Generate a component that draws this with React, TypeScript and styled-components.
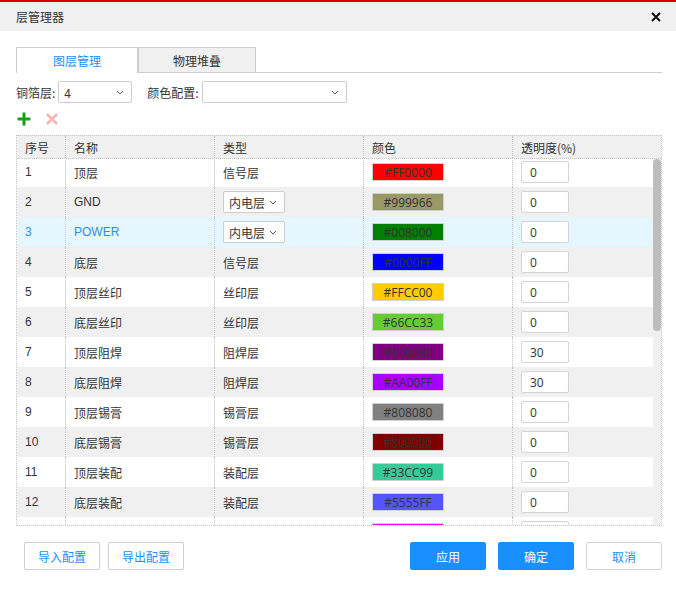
import * as React from "react";
import styled, { createGlobalStyle } from "styled-components";

const GlobalStyle = createGlobalStyle`
  html, body {
    margin: 0;
    padding: 0;
    background: #fff;
  }
  body {
    font-family: "Liberation Sans", "Noto Sans CJK SC", sans-serif;
    font-size: 12px;
    color: #333;
  }
  * {
    box-sizing: border-box;
  }
`;

const Dialog = styled.div`
  width: 676px;
  height: 591px;
  border-top: 2px solid #d40000;
  background: #fff;
  display: flex;
  flex-direction: column;
`;

const TitleBar = styled.div`
  height: 29px;
  background: #f0f0f0;
  display: flex;
  align-items: center;
  justify-content: space-between;
  padding: 0 15px 0 16px;
`;

const Title = styled.span`
  font-family: "Noto Sans CJK SC", sans-serif;
  font-size: 12px;
  color: #333;
`;

const CloseButton = styled.span`
  display: flex;
  width: 10px;
  height: 10px;
  cursor: pointer;
`;

const Content = styled.div`
  padding: 16px 14px 0 16px;
  display: flex;
  flex-direction: column;
`;

const TabBar = styled.div`
  display: flex;
  align-items: flex-end;
  height: 26px;
  border-bottom: 1px solid #ccc;
`;

const Tab = styled.div<{ $active?: boolean; $width: number }>`
  width: ${(p) => p.$width}px;
  height: ${(p) => (p.$active ? 26 : 25)}px;
  margin-bottom: ${(p) => (p.$active ? -1 : 0)}px;
  border: 1px solid #ccc;
  border-bottom: none;
  background: ${(p) => (p.$active ? "#fff" : "#f0f0f0")};
  color: ${(p) => (p.$active ? "#1890ff" : "#333")};
  font-family: "Noto Sans CJK SC", sans-serif;
  font-size: 12px;
  display: flex;
  align-items: center;
  justify-content: center;
  padding-bottom: ${(p) => (p.$active ? 1 : 0)}px;
`;

const FormRow = styled.div`
  display: flex;
  align-items: center;
  height: 22px;
  margin-top: 8px;
`;

const Label = styled.span<{ $gap?: number }>`
  font-family: "Noto Sans CJK SC", sans-serif;
  margin-left: ${(p) => p.$gap ?? 0}px;
  margin-right: 3px;
`;

const Select = styled.div<{ $width: number }>`
  width: ${(p) => p.$width}px;
  height: 22px;
  border: 1px solid #ccc;
  border-radius: 2px;
  background: #fff;
  display: flex;
  align-items: center;
  justify-content: space-between;
  padding: 0 7px 0 5px;
  font-family: "Noto Sans CJK SC", sans-serif;
  font-size: 12px;
  color: #333;
`;

const ToolRow = styled.div`
  display: flex;
  align-items: center;
  gap: 15px;
  height: 18px;
  margin-top: 7px;
  padding-left: 1px;
`;

const IconButton = styled.span`
  display: flex;
  cursor: pointer;
`;

const Table = styled.div`
  margin-top: 7px;
  border-left: 1px dotted #c4c4c4;
  border-right: 1px dotted #c4c4c4;
  border-bottom: 1px dotted #c4c4c4;
`;

const cols = "49px 149px 149px 149px 1fr";

const HeaderRow = styled.div`
  display: grid;
  grid-template-columns: ${cols};
  height: 24px;
  background: #f0f0f0;
  border-top: 1px dotted #c4c4c4;
  border-bottom: 1px dotted #c4c4c4;
`;

const HeadCell = styled.div<{ $last?: boolean }>`
  display: flex;
  align-items: center;
  padding-left: 8px;
  font-family: "Noto Sans CJK SC", sans-serif;
  border-right: ${(p) => (p.$last ? "none" : "1px dotted #c4c4c4")};
`;

const BodyArea = styled.div`
  display: flex;
  height: 366px;
`;

const RowsViewport = styled.div`
  flex: 1;
  overflow: hidden;
`;

const RowsList = styled.div`
  margin-top: -2px;
`;

const ScrollTrack = styled.div`
  width: 8px;
  background: #f0f0f0;
`;

const ScrollThumb = styled.div`
  height: 172px;
  background: #bdbdbd;
  border-radius: 4px;
`;

const Row = styled.div<{ $striped?: boolean; $selected?: boolean }>`
  display: grid;
  grid-template-columns: ${cols};
  height: 30px;
  background: ${(p) => (p.$selected ? "#e6f6fe" : p.$striped ? "#f0f0f0" : "#fff")};
  color: ${(p) => (p.$selected ? "#2d8cf0" : "#333")};
`;

const Cell = styled.div<{ $last?: boolean; $cjk?: boolean }>`
  display: flex;
  align-items: center;
  padding-left: 8px;
  font-family: ${(p) =>
    p.$cjk ? `"Noto Sans CJK SC", sans-serif` : `"Liberation Sans", "Noto Sans CJK SC", sans-serif`};
  border-right: ${(p) => (p.$last ? "none" : "1px dotted #c4c4c4")};
`;

const Swatch = styled.div<{ $color: string }>`
  width: 72px;
  height: 18px;
  border: 1px solid #d0d0d0;
  background: ${(p) => p.$color};
  color: #333;
  font-family: "Open Sans", "Noto Sans", sans-serif;
  font-size: 12px;
  display: flex;
  align-items: center;
  justify-content: center;
`;

const NumInput = styled.div`
  width: 48px;
  height: 22px;
  border: 1px solid #d4d4d4;
  border-radius: 2px;
  background: #fff;
  color: #333;
  font-family: "Open Sans", "Noto Sans", sans-serif;
  font-size: 12px;
  display: flex;
  align-items: center;
  padding-left: 8px;
`;

const Footer = styled.div`
  display: flex;
  align-items: center;
  margin-top: 16px;
  padding-left: 8px;
  gap: 8px;
`;

const Spacer = styled.div`
  flex: 1;
`;

const RightGroup = styled.div`
  display: flex;
  gap: 12px;
`;

const Button = styled.button<{ $primary?: boolean }>`
  width: 76px;
  height: 28px;
  border-radius: 2px;
  border: 1px solid ${(p) => (p.$primary ? "#1890ff" : "#d0d0d0")};
  background: ${(p) => (p.$primary ? "#1890ff" : "#fff")};
  color: ${(p) => (p.$primary ? "#fff" : "#1890ff")};
  font-family: "Noto Sans CJK SC", sans-serif;
  font-size: 12px;
  padding: 0;
  cursor: pointer;
`;

const Chevron = () => (
  <svg width="8" height="5" viewBox="0 0 8 5">
    <polyline points="1,1 4,4 7,1" fill="none" stroke="#555" strokeWidth="1" />
  </svg>
);

type Layer = {
  name: string;
  type: string;
  color: string;
  alpha: number;
  editable?: boolean;
};

const layers: Layer[] = [
  { name: "顶层", type: "信号层", color: "#FF0000", alpha: 0 },
  { name: "GND", type: "内电层", color: "#999966", alpha: 0, editable: true },
  { name: "POWER", type: "内电层", color: "#008000", alpha: 0, editable: true },
  { name: "底层", type: "信号层", color: "#0000FF", alpha: 0 },
  { name: "顶层丝印", type: "丝印层", color: "#FFCC00", alpha: 0 },
  { name: "底层丝印", type: "丝印层", color: "#66CC33", alpha: 0 },
  { name: "顶层阻焊", type: "阻焊层", color: "#800080", alpha: 30 },
  { name: "底层阻焊", type: "阻焊层", color: "#AA00FF", alpha: 30 },
  { name: "顶层锡膏", type: "锡膏层", color: "#808080", alpha: 0 },
  { name: "底层锡膏", type: "锡膏层", color: "#800000", alpha: 0 },
  { name: "顶层装配", type: "装配层", color: "#33CC99", alpha: 0 },
  { name: "底层装配", type: "装配层", color: "#5555FF", alpha: 0 },
  { name: "板框层", type: "板框层", color: "#FF00FF", alpha: 0 },
  { name: "多层", type: "多层", color: "#C0C0C0", alpha: 0 },
];

export default function App() {
  return (
    <>
      <GlobalStyle />
      <Dialog>
        <TitleBar>
          <Title>层管理器</Title>
          <CloseButton>
            <svg width="10" height="10" viewBox="0 0 10 10">
              <path d="M1 1 L9 9 M9 1 L1 9" stroke="#111" strokeWidth="2" />
            </svg>
          </CloseButton>
        </TitleBar>

        <Content>
          <TabBar>
            <Tab $active $width={122}>图层管理</Tab>
            <Tab $width={118}>物理堆叠</Tab>
          </TabBar>

          <FormRow>
            <Label>铜箔层:</Label>
            <Select $width={74}>
              <span>4</span>
              <Chevron />
            </Select>
            <Label $gap={15}>颜色配置:</Label>
            <Select $width={145}>
              <span />
              <Chevron />
            </Select>
          </FormRow>

          <ToolRow>
            <IconButton>
              <svg width="14" height="14" viewBox="0 0 14 14">
                <path d="M7 0.5 V13.5 M0.5 7 H13.5" stroke="#16a016" strokeWidth="3" />
              </svg>
            </IconButton>
            <IconButton>
              <svg width="12" height="12" viewBox="0 0 12 12">
                <path d="M1 1 L11 11 M11 1 L1 11" stroke="#fbb4b4" strokeWidth="2.6" />
              </svg>
            </IconButton>
          </ToolRow>

          <Table>
            <HeaderRow>
              <HeadCell>序号</HeadCell>
              <HeadCell>名称</HeadCell>
              <HeadCell>类型</HeadCell>
              <HeadCell>颜色</HeadCell>
              <HeadCell $last>透明度(%)</HeadCell>
            </HeaderRow>
            <BodyArea>
              <RowsViewport>
                <RowsList>
                  {layers.map((layer, i) => (
                    <Row key={i} $striped={i % 2 === 1} $selected={i === 2}>
                      <Cell>{i + 1}</Cell>
                      <Cell>{layer.name}</Cell>
                      <Cell $cjk>
                        {layer.editable ? (
                          <Select $width={62}>
                            <span>{layer.type}</span>
                            <Chevron />
                          </Select>
                        ) : (
                          layer.type
                        )}
                      </Cell>
                      <Cell>
                        <Swatch $color={layer.color}>{layer.color}</Swatch>
                      </Cell>
                      <Cell $last>
                        <NumInput>{layer.alpha}</NumInput>
                      </Cell>
                    </Row>
                  ))}
                </RowsList>
              </RowsViewport>
              <ScrollTrack>
                <ScrollThumb />
              </ScrollTrack>
            </BodyArea>
          </Table>

          <Footer>
            <Button>导入配置</Button>
            <Button>导出配置</Button>
            <Spacer />
            <RightGroup>
              <Button $primary>应用</Button>
              <Button $primary>确定</Button>
              <Button>取消</Button>
            </RightGroup>
          </Footer>
        </Content>
      </Dialog>
    </>
  );
}
